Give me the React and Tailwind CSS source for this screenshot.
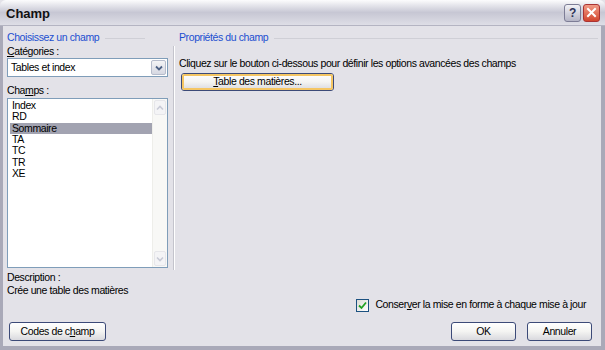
import React from 'react';

const font = { fontFamily: '"Liberation Sans", Arial, sans-serif' };

function GroupHeader({ children, className = '' }) {
  return (
    <div className={`flex items-center h-[12px] ${className}`}>
      <span className="text-[#1c4fd0] whitespace-nowrap">{children}</span>
      <div className="flex-1 h-px bg-[#cfcfd6] ml-[6px] mt-[1px]" />
    </div>
  );
}

function XpButton({ children, className = '', focus = false }) {
  return (
    <div
      className={`flex items-center justify-center rounded-[3px] border border-[#3c4a78] bg-linear-to-b from-[#ffffff] via-[#f4f4f2] to-[#d9d9de] ${className}`}
    >
      <div
        className={`flex items-center justify-center w-full h-full rounded-[2px] ${
          focus ? 'border-2 border-[#f5c663]' : 'border border-transparent'
        }`}
      >
        {children}
      </div>
    </div>
  );
}

export default function App() {
  const items = ['Index', 'RD', 'Sommaire', 'TA', 'TC', 'TR', 'XE'];
  return (
    <div style={font} className="w-[605px] h-[350px] flex flex-col text-[10.5px] tracking-[-0.4px] text-black bg-[#e3e2e8] overflow-hidden">
      {/* title bar */}
      <div className="h-[26px] flex items-center rounded-t-[6px] bg-linear-to-b from-[#fcfcfd] via-[#c7c7d4] to-[#dedee6] border-b border-[#b4b4c2] pl-[6px] pr-[5px]">
        <span className="font-bold text-[13px] tracking-normal text-[#111] mt-[2px]">Champ</span>
        <div className="flex-1" />
        <div className="w-[17px] h-[18px] rounded-[3px] border border-[#7d7d96] bg-linear-to-b from-[#f2f2f6] to-[#b5b5c6] flex items-center justify-center text-[12px] font-bold text-[#2e3358] mr-[2px]">
          ?
        </div>
        <div className="w-[17px] h-[18px] rounded-[3px] border border-[#a33] bg-linear-to-b from-[#f09a86] to-[#d1432c] flex items-center justify-center">
          <svg width="11" height="11" viewBox="0 0 11 11">
            <path d="M2 2 L9 9 M9 2 L2 9" stroke="white" strokeWidth="2" strokeLinecap="square" />
          </svg>
        </div>
      </div>

      {/* body */}
      <div className="flex-1 flex flex-col border-l-[3px] border-r-[4px] border-b-[4px] border-[#a9a9b8] pl-[4px] pr-[3px]">
        <div className="flex pt-[6px] h-[242px]">
          {/* left column */}
          <div className="w-[161px] flex flex-col">
            <GroupHeader className="mr-[-138px] w-[138px]">Choisissez un champ</GroupHeader>
            <div className="mt-[1px] h-[12px] leading-[12px]">
              <span className="underline">C</span>atégories :
            </div>
            <div className="mt-[1px] h-[19px] bg-white border border-[#7f9db9] flex items-center">
              <span className="pl-[3px] flex-1">Tables et index</span>
              <div className="w-[15px] h-[15px] mr-[1px] rounded-[2px] border border-[#b6bccc] bg-linear-to-b from-[#f4f4f6] to-[#d6d8e2] flex items-center justify-center">
                <svg width="8" height="6" viewBox="0 0 8 6">
                  <path d="M1 1.5 L4 4.5 L7 1.5" stroke="#4d6185" strokeWidth="1.8" fill="none" />
                </svg>
              </div>
            </div>
            <div className="mt-[7px] h-[12px] leading-[12px]">
              Cha<span className="underline">m</span>ps :
            </div>
            <div className="mt-[2px] h-[170px] bg-white border border-[#7f9db9] flex">
              <div className="flex-1 pl-[2px] pt-[1px]">
                {items.map((it) => (
                  <div
                    key={it}
                    className={`h-[11.33px] leading-[11px] pl-[2px] ${it === 'Sommaire' ? 'bg-[#a2a3b1]' : ''}`}
                  >
                    {it}
                  </div>
                ))}
              </div>
              <div className="w-[15px] flex flex-col bg-[#f8f8f6] border-l border-[#eeeeea]">
                <div className="h-[15px] m-[1px] rounded-[2px] border border-[#e6e6ea] bg-[#f4f4f6] flex items-center justify-center">
                  <svg width="8" height="6" viewBox="0 0 8 6">
                    <path d="M1 4.5 L4 1.5 L7 4.5" stroke="#c8cad6" strokeWidth="1.6" fill="none" />
                  </svg>
                </div>
                <div className="flex-1" />
                <div className="h-[15px] m-[1px] rounded-[2px] border border-[#e6e6ea] bg-[#f4f4f6] flex items-center justify-center">
                  <svg width="8" height="6" viewBox="0 0 8 6">
                    <path d="M1 1.5 L4 4.5 L7 1.5" stroke="#c8cad6" strokeWidth="1.6" fill="none" />
                  </svg>
                </div>
              </div>
            </div>
          </div>

          {/* separator */}
          <div className="ml-[5px] mt-[14px] w-[2px] border-l border-[#c4c4cc] border-r border-r-white h-[224px]" />

          {/* right column */}
          <div className="flex-1 flex flex-col pl-[4px]">
            <GroupHeader>Propriétés du champ</GroupHeader>
            <div className="mt-[13px] h-[12px] leading-[12px] whitespace-nowrap">
              Cliquez sur le bouton ci-dessous pour définir les options avancées des champs
            </div>
            <XpButton focus className="mt-[4px] ml-[2px] w-[153px] h-[18px]">
              <span>
                <span className="underline">T</span>able des matières...
              </span>
            </XpButton>
          </div>
        </div>

        <div className="h-[12px] leading-[12px] mt-[3px]">Description :</div>
        <div className="h-[12px] leading-[12px] mt-[1px]">Crée une table des matières</div>

        <div className="flex items-center mt-[2px] h-[14px]">
          <div className="flex-1" />
          <div className="w-[13px] h-[13px] border border-[#1c5180] bg-linear-to-br from-[#dcdcd6] to-white flex items-center justify-center mr-[6px]">
            <svg width="9" height="9" viewBox="0 0 9 9">
              <path d="M1 4.5 L3.5 7 L8 1.5" stroke="#21a121" strokeWidth="1.8" fill="none" />
            </svg>
          </div>
          <span className="mr-[12px]">
            Conser<span className="underline">v</span>er la mise en forme à chaque mise à jour
          </span>
        </div>

        <div className="flex items-center mt-[10px]">
          <XpButton className="ml-[2px] w-[97px] h-[19px]">
            <span>
              Codes de c<span className="underline">h</span>amp
            </span>
          </XpButton>
          <div className="flex-1" />
          <XpButton className="w-[65px] h-[19px]">OK</XpButton>
          <XpButton className="ml-[11px] mr-[6px] w-[65px] h-[19px]">Annuler</XpButton>
        </div>
      </div>
    </div>
  );
}
